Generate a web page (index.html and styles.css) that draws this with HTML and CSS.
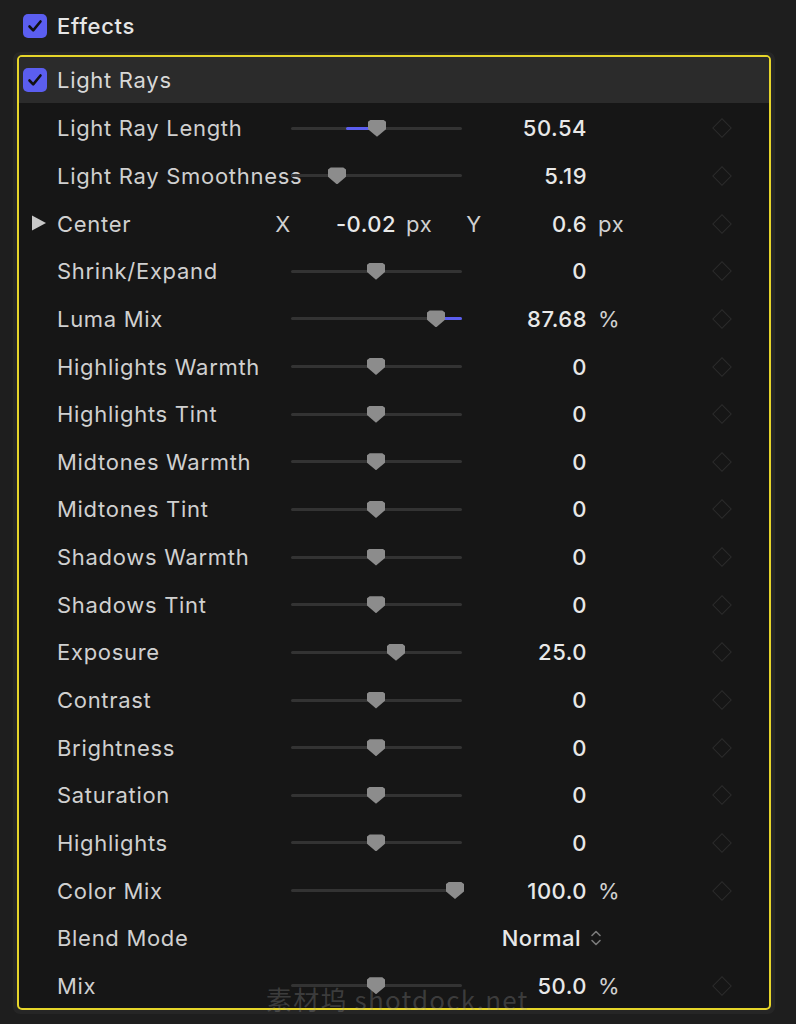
FILE: index.html
```html
<!DOCTYPE html>
<html>
<head>
<meta charset="utf-8">
<link rel="stylesheet" href="styles.css">
</head>
<body>
<div class="panel">
  <div class="top-row">
    <span class="check"><svg viewBox="0 0 24 24" width="24" height="24"><rect x="0" y="0" width="24" height="24" rx="5" fill="#5b5ef0"/><path d="M6.5 12.5 L10.2 16.3 L17.5 7.5" fill="none" stroke="#111" stroke-width="2.6" stroke-linecap="round" stroke-linejoin="round"/></svg></span>
    <span class="top-title">Effects</span>
  </div>
  <div class="frame">
    <div class="box">
      <div class="head-row">
        <span class="check"><svg viewBox="0 0 24 24" width="24" height="24"><rect x="0" y="0" width="24" height="24" rx="5" fill="#5b5ef0"/><path d="M6.5 12.5 L10.2 16.3 L17.5 7.5" fill="none" stroke="#111" stroke-width="2.6" stroke-linecap="round" stroke-linejoin="round"/></svg></span>
        <span class="head-title">Light Rays</span>
      </div>

      <div class="row">
        <span class="label">Light Ray Length</span>
        <span class="slider"><span class="fill" style="left:55px;width:26px"></span><span class="thumb" style="left:86px"></span></span>
        <span class="value">50.54</span><span class="unit"></span><span class="kf"></span>
      </div>
      <div class="row">
        <span class="label">Light Ray Smoothness</span>
        <span class="slider"><span class="thumb" style="left:46px"></span></span>
        <span class="value">5.19</span><span class="unit"></span><span class="kf"></span>
      </div>
      <div class="row center-row">
        <span class="label c-label"><svg class="tri" viewBox="0 0 16 16" width="16" height="16"><path d="M1 0.5 L15 8 L1 15.5 Z" fill="#c8c8c8"/></svg>Center</span>
        <span class="axis ax-x">X</span>
        <span class="value v-x">-0.02</span>
        <span class="unit u-x">px</span>
        <span class="axis ax-y">Y</span>
        <span class="value v-y">0.6</span>
        <span class="unit">px</span><span class="kf"></span>
      </div>
      <div class="row">
        <span class="label">Shrink/Expand</span>
        <span class="slider"><span class="thumb" style="left:85px"></span></span>
        <span class="value">0</span><span class="unit"></span><span class="kf"></span>
      </div>
      <div class="row">
        <span class="label">Luma Mix</span>
        <span class="slider"><span class="fill" style="left:150px;width:21px"></span><span class="thumb" style="left:145px"></span></span>
        <span class="value">87.68</span><span class="unit">%</span><span class="kf"></span>
      </div>
      <div class="row">
        <span class="label">Highlights Warmth</span>
        <span class="slider"><span class="thumb" style="left:85px"></span></span>
        <span class="value">0</span><span class="unit"></span><span class="kf"></span>
      </div>
      <div class="row">
        <span class="label">Highlights Tint</span>
        <span class="slider"><span class="thumb" style="left:85px"></span></span>
        <span class="value">0</span><span class="unit"></span><span class="kf"></span>
      </div>
      <div class="row">
        <span class="label">Midtones Warmth</span>
        <span class="slider"><span class="thumb" style="left:85px"></span></span>
        <span class="value">0</span><span class="unit"></span><span class="kf"></span>
      </div>
      <div class="row">
        <span class="label">Midtones Tint</span>
        <span class="slider"><span class="thumb" style="left:85px"></span></span>
        <span class="value">0</span><span class="unit"></span><span class="kf"></span>
      </div>
      <div class="row">
        <span class="label">Shadows Warmth</span>
        <span class="slider"><span class="thumb" style="left:85px"></span></span>
        <span class="value">0</span><span class="unit"></span><span class="kf"></span>
      </div>
      <div class="row">
        <span class="label">Shadows Tint</span>
        <span class="slider"><span class="thumb" style="left:85px"></span></span>
        <span class="value">0</span><span class="unit"></span><span class="kf"></span>
      </div>
      <div class="row">
        <span class="label">Exposure</span>
        <span class="slider"><span class="thumb" style="left:105px"></span></span>
        <span class="value">25.0</span><span class="unit"></span><span class="kf"></span>
      </div>
      <div class="row">
        <span class="label">Contrast</span>
        <span class="slider"><span class="thumb" style="left:85px"></span></span>
        <span class="value">0</span><span class="unit"></span><span class="kf"></span>
      </div>
      <div class="row">
        <span class="label">Brightness</span>
        <span class="slider"><span class="thumb" style="left:85px"></span></span>
        <span class="value">0</span><span class="unit"></span><span class="kf"></span>
      </div>
      <div class="row">
        <span class="label">Saturation</span>
        <span class="slider"><span class="thumb" style="left:85px"></span></span>
        <span class="value">0</span><span class="unit"></span><span class="kf"></span>
      </div>
      <div class="row">
        <span class="label">Highlights</span>
        <span class="slider"><span class="thumb" style="left:85px"></span></span>
        <span class="value">0</span><span class="unit"></span><span class="kf"></span>
      </div>
      <div class="row">
        <span class="label">Color Mix</span>
        <span class="slider"><span class="thumb" style="left:164px"></span></span>
        <span class="value">100.0</span><span class="unit">%</span><span class="kf"></span>
      </div>
      <div class="row">
        <span class="label">Blend Mode</span>
        <span class="slider empty"></span>
        <span class="value popup">Normal</span>
        <span class="unit chev"><svg viewBox="0 0 12 20" width="12" height="20"><path d="M2 7.5 L6 3.5 L10 7.5 M2 12.5 L6 16.5 L10 12.5" fill="none" stroke="#7a7a7a" stroke-width="1.6" stroke-linecap="round" stroke-linejoin="round"/></svg></span>
        <span class="kf none"></span>
      </div>
      <div class="row">
        <span class="label">Mix</span>
        <span class="slider"><span class="thumb" style="left:85px"></span></span>
        <span class="value">50.0</span><span class="unit">%</span><span class="kf"></span>
      </div>
    </div>
  </div>
  <div class="watermark">素材坞 shotdock.net</div>
</div>
</body>
</html>
```

FILE: styles.css
```css
html, body {
  margin: 0;
  padding: 0;
  background: #1e1e1e;
}
body {
  width: 796px;
  height: 1024px;
  overflow: hidden;
  font-family: Inter, "Noto Sans CJK SC", sans-serif;
  color: #d2d2d2;
  letter-spacing: 0.7px;
}
.panel {
  position: relative;
  width: 796px;
  height: 1024px;
}
.top-row {
  height: 52px;
  display: flex;
  align-items: center;
  padding-left: 23px;
  gap: 10px;
}
.check {
  width: 24px;
  height: 24px;
  display: flex;
}
.top-title {
  font-size: 22px;
  font-weight: 500;
  color: #e6e6e6;
}
.frame {
  margin-left: 13px;
  width: 762px;
  background: #262626;
  border-radius: 7px;
  padding: 3px 4px 4px 4px;
  box-sizing: border-box;
}
.box {
  border: 2px solid #e6d52a;
  border-radius: 5px;
  background: #161616;
  overflow: hidden;
}
.head-row {
  height: 46px;
  background: #2b2b2b;
  display: flex;
  align-items: center;
  padding-left: 4px;
  gap: 10px;
}
.head-title {
  font-size: 22px;
  color: #d8d8d8;
}
.row {
  height: 47.65px;
  box-sizing: border-box;
  padding-top: 3px;
  display: flex;
  align-items: center;
  padding-left: 38px;
  font-size: 22px;
}
.label {
  width: 234px;
  flex: none;
  color: #d0d0d0;
  white-space: nowrap;
}
.slider {
  position: relative;
  width: 171px;
  height: 3px;
  background: #333333;
  border-radius: 2px;
  flex: none;
}
.slider.empty {
  background: transparent;
}
.fill {
  position: absolute;
  top: 0;
  height: 3px;
  background: #5b5ef0;
  border-radius: 2px;
}
.thumb {
  position: absolute;
  top: -7px;
  width: 18px;
  height: 17px;
  margin-left: -9px;
  background: #8c8c8c;
  clip-path: polygon(15% 0, 85% 0, 100% 12%, 100% 55%, 50% 100%, 0 55%, 0 12%);
}
.value {
  width: 125px;
  flex: none;
  text-align: right;
  color: #e8e8e8;
  font-weight: 500;
  letter-spacing: 0.5px;
}
.unit {
  width: 117px;
  padding-left: 11px;
  flex: none;
  color: #d0d0d0;
}
.kf {
  width: 12px;
  height: 12px;
  flex: none;
  border: 1.5px solid #2b2b2b;
  transform: rotate(45deg);
  margin-left: 0;
}
.kf.none {
  border-color: transparent;
}
.c-label {
  width: 218px;
  position: relative;
}
.tri {
  position: absolute;
  left: -26px;
  top: 4px;
}
.axis {
  width: 16px;
  flex: none;
  text-align: center;
  color: #d0d0d0;
}
.v-x {
  width: 105px;
}
.u-x {
  width: 58px;
  padding-left: 10px;
}
.ax-y {
  width: 20px;
}
.v-y {
  width: 103px;
}
.popup {
  padding-right: 6px;
  box-sizing: border-box;
}
.chev {
  display: flex;
  align-items: center;
  padding-left: 3px;
  width: 125px;
}
.watermark {
  position: absolute;
  left: 266px;
  top: 980px;
  font-size: 26px;
  letter-spacing: 1.2px;
  color: rgba(160, 160, 160, 0.28);
  font-family: "Noto Sans CJK SC", Inter, sans-serif;
  white-space: nowrap;
  pointer-events: none;
}
```
